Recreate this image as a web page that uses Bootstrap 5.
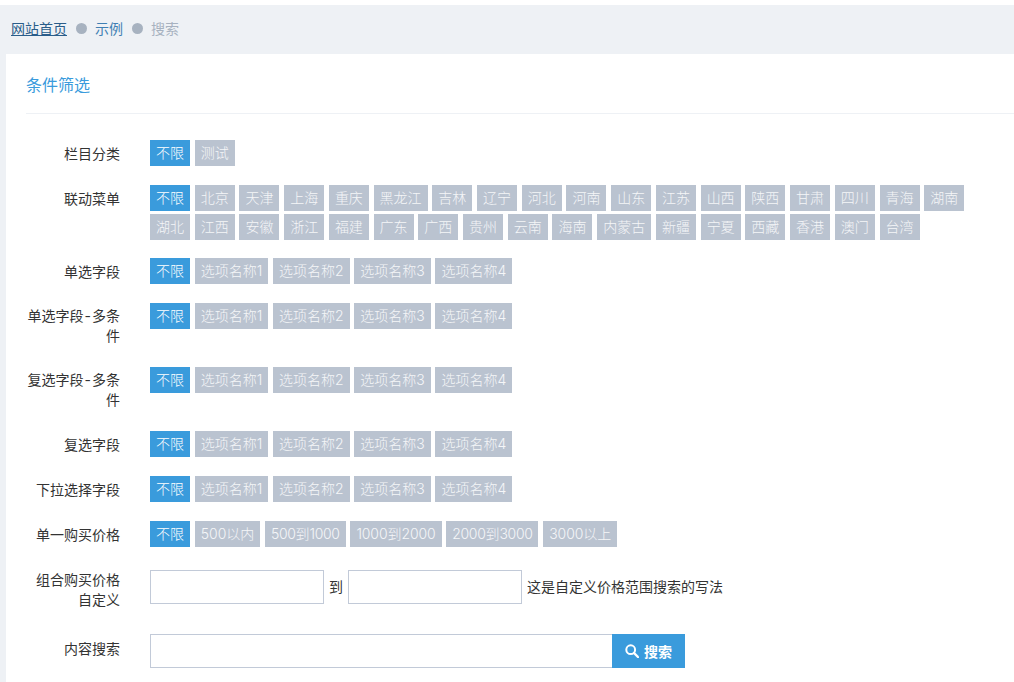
<!DOCTYPE html>
<html lang="zh-CN">
<head>
<meta charset="utf-8">
<title>搜索</title>
<link href="https://cdn.jsdelivr.net/npm/bootstrap@5.3.0/dist/css/bootstrap.min.css" rel="stylesheet">
<style>
html,body{height:682px;overflow:hidden}
body{background:#fff;color:#333;font-family:"Inter","Noto Sans CJK SC",sans-serif;font-size:14px;line-height:20px;padding-top:5px}
.crumbs{background:#eef1f5;height:49px;padding:0 11px 2px;margin:0;align-items:center;--bs-breadcrumb-margin-bottom:0;--bs-breadcrumb-item-padding-x:0}
.crumbs .breadcrumb-item{display:flex;align-items:center}
.crumbs .breadcrumb-item+.breadcrumb-item::before{content:"";float:none;width:11px;height:11px;padding:0;margin:0 8px 0 9px;border-radius:50%;background:#a7b2c0}
.crumbs a{color:#2a5d8a}
.crumbs a.second{color:#3f7fb3;text-decoration:none}
.crumbs .breadcrumb-item.active{color:#a7b2c0}
.sheet{background:#eef1f5;padding-left:6px;height:628px}
.panel{background:#fff;height:100%;padding:0 0 0 20px;overflow:hidden}
.heading{color:#3a9bdc;font-size:16px;line-height:22px;height:60px;padding-top:20px;border-bottom:1px solid #eef1f5;margin-bottom:26px}
.frow{display:flex;margin-bottom:15px;min-height:30px}
.frow.two{min-height:49px}
.lab{flex:0 0 94px;width:94px;margin-right:30px;text-align:right;padding-top:4px}
.frow.two .lab{padding-top:3px}
.frow.calc{margin-top:19px}
.frow.calc .lab{padding-top:0}
.frow.find .lab{padding-top:5px}
.dash{padding:0 1px}
.chips{display:flex;flex-wrap:wrap;gap:3px 4.72px;width:850px;align-content:flex-start}
.chips.wrapped{padding-bottom:3px}
.chip{--bs-btn-padding-x:6px;--bs-btn-padding-y:0;--bs-btn-font-size:14px;--bs-btn-font-weight:300;--bs-btn-line-height:25px;--bs-btn-border-width:0;--bs-btn-border-radius:0;--bs-btn-bg:#bac3d0;--bs-btn-color:#f5f6f8;--bs-btn-hover-bg:#bac3d0;--bs-btn-hover-color:#f5f6f8;height:26px;white-space:nowrap}
.chip.on{--bs-btn-bg:#3a9bdc;--bs-btn-color:#fff;--bs-btn-hover-bg:#3a9bdc;--bs-btn-hover-color:#fff}
.digits{letter-spacing:-.35px}
.digits-loose{letter-spacing:-.1px}
.boxes{display:flex;align-items:flex-start;gap:5px;line-height:34px}
.field{height:34px;border:1px solid #c2cad8;border-radius:0;padding:0 10px;font-size:14px}
.boxes .field{width:174px;flex:none}
.finder{width:535px;flex-wrap:nowrap}
.finder .field{width:462px;flex:none;border-right:0}
.go{--bs-btn-bg:#3a9bdc;--bs-btn-color:#fff;--bs-btn-hover-bg:#3a9bdc;--bs-btn-hover-color:#fff;--bs-btn-border-width:0;--bs-btn-border-radius:0;--bs-btn-padding-x:0;--bs-btn-padding-y:0;--bs-btn-font-size:14px;--bs-btn-font-weight:700;width:73px;height:34px;display:flex;align-items:center;justify-content:center;gap:5px}
</style>
</head>
<body>
<nav aria-label="breadcrumb">
<ol class="breadcrumb crumbs">
<li class="breadcrumb-item"><a href="#">网站首页</a></li>
<li class="breadcrumb-item"><a class="second" href="#">示例</a></li>
<li class="breadcrumb-item active" aria-current="page">搜索</li>
</ol>
</nav>
<main class="sheet">
<div class="panel">
<div class="heading">条件筛选</div>
<div class="frow"><div class="lab">栏目分类</div><div class="chips"><a class="btn chip on">不限</a><a class="btn chip">测试</a></div></div>
<div class="frow"><div class="lab">联动菜单</div><div class="chips wrapped"><a class="btn chip on">不限</a><a class="btn chip">北京</a><a class="btn chip">天津</a><a class="btn chip">上海</a><a class="btn chip">重庆</a><a class="btn chip">黑龙江</a><a class="btn chip">吉林</a><a class="btn chip">辽宁</a><a class="btn chip">河北</a><a class="btn chip">河南</a><a class="btn chip">山东</a><a class="btn chip">江苏</a><a class="btn chip">山西</a><a class="btn chip">陕西</a><a class="btn chip">甘肃</a><a class="btn chip">四川</a><a class="btn chip">青海</a><a class="btn chip">湖南</a><a class="btn chip">湖北</a><a class="btn chip">江西</a><a class="btn chip">安徽</a><a class="btn chip">浙江</a><a class="btn chip">福建</a><a class="btn chip">广东</a><a class="btn chip">广西</a><a class="btn chip">贵州</a><a class="btn chip">云南</a><a class="btn chip">海南</a><a class="btn chip">内蒙古</a><a class="btn chip">新疆</a><a class="btn chip">宁夏</a><a class="btn chip">西藏</a><a class="btn chip">香港</a><a class="btn chip">澳门</a><a class="btn chip">台湾</a></div></div>
<div class="frow"><div class="lab">单选字段</div><div class="chips"><a class="btn chip on">不限</a><a class="btn chip">选项名称1</a><a class="btn chip">选项名称2</a><a class="btn chip">选项名称3</a><a class="btn chip">选项名称4</a></div></div>
<div class="frow two"><div class="lab">单选字段<span class="dash">-</span>多条件</div><div class="chips"><a class="btn chip on">不限</a><a class="btn chip">选项名称1</a><a class="btn chip">选项名称2</a><a class="btn chip">选项名称3</a><a class="btn chip">选项名称4</a></div></div>
<div class="frow two"><div class="lab">复选字段<span class="dash">-</span>多条件</div><div class="chips"><a class="btn chip on">不限</a><a class="btn chip">选项名称1</a><a class="btn chip">选项名称2</a><a class="btn chip">选项名称3</a><a class="btn chip">选项名称4</a></div></div>
<div class="frow"><div class="lab">复选字段</div><div class="chips"><a class="btn chip on">不限</a><a class="btn chip">选项名称1</a><a class="btn chip">选项名称2</a><a class="btn chip">选项名称3</a><a class="btn chip">选项名称4</a></div></div>
<div class="frow"><div class="lab">下拉选择字段</div><div class="chips"><a class="btn chip on">不限</a><a class="btn chip">选项名称1</a><a class="btn chip">选项名称2</a><a class="btn chip">选项名称3</a><a class="btn chip">选项名称4</a></div></div>
<div class="frow"><div class="lab">单一购买价格</div><div class="chips"><a class="btn chip on">不限</a><a class="btn chip">500以内</a><a class="btn chip"><span class="digits">500</span>到<span class="digits">1000</span></a><a class="btn chip"><span class="digits-loose">1000</span>到<span class="digits-loose">2000</span></a><a class="btn chip"><span class="digits">2000</span>到<span class="digits">3000</span></a><a class="btn chip"><span class="digits-loose">3000</span>以上</a></div></div>
<div class="frow two calc"><div class="lab">组合购买价格自定义</div><div class="boxes"><input class="form-control field" type="text" aria-label="最低价"><span>到</span><input class="form-control field" type="text" aria-label="最高价"><span>这是自定义价格范围搜索的写法</span></div></div>
<div class="frow find"><div class="lab">内容搜索</div><div class="input-group finder"><input class="form-control field" type="text" aria-label="内容搜索"><button class="btn go ms-0" type="button"><svg width="14" height="14" viewBox="0 0 14 14" fill="none" stroke="#fff" aria-hidden="true"><circle cx="5.7" cy="5.7" r="4.4" stroke-width="2"/><path d="M9 9l4 4" stroke-width="2.4" stroke-linecap="round"/></svg>搜索</button></div></div>
</div>
</main>
<script src="https://cdn.jsdelivr.net/npm/bootstrap@5.3.0/dist/js/bootstrap.bundle.min.js"></script>
</body>
</html>
